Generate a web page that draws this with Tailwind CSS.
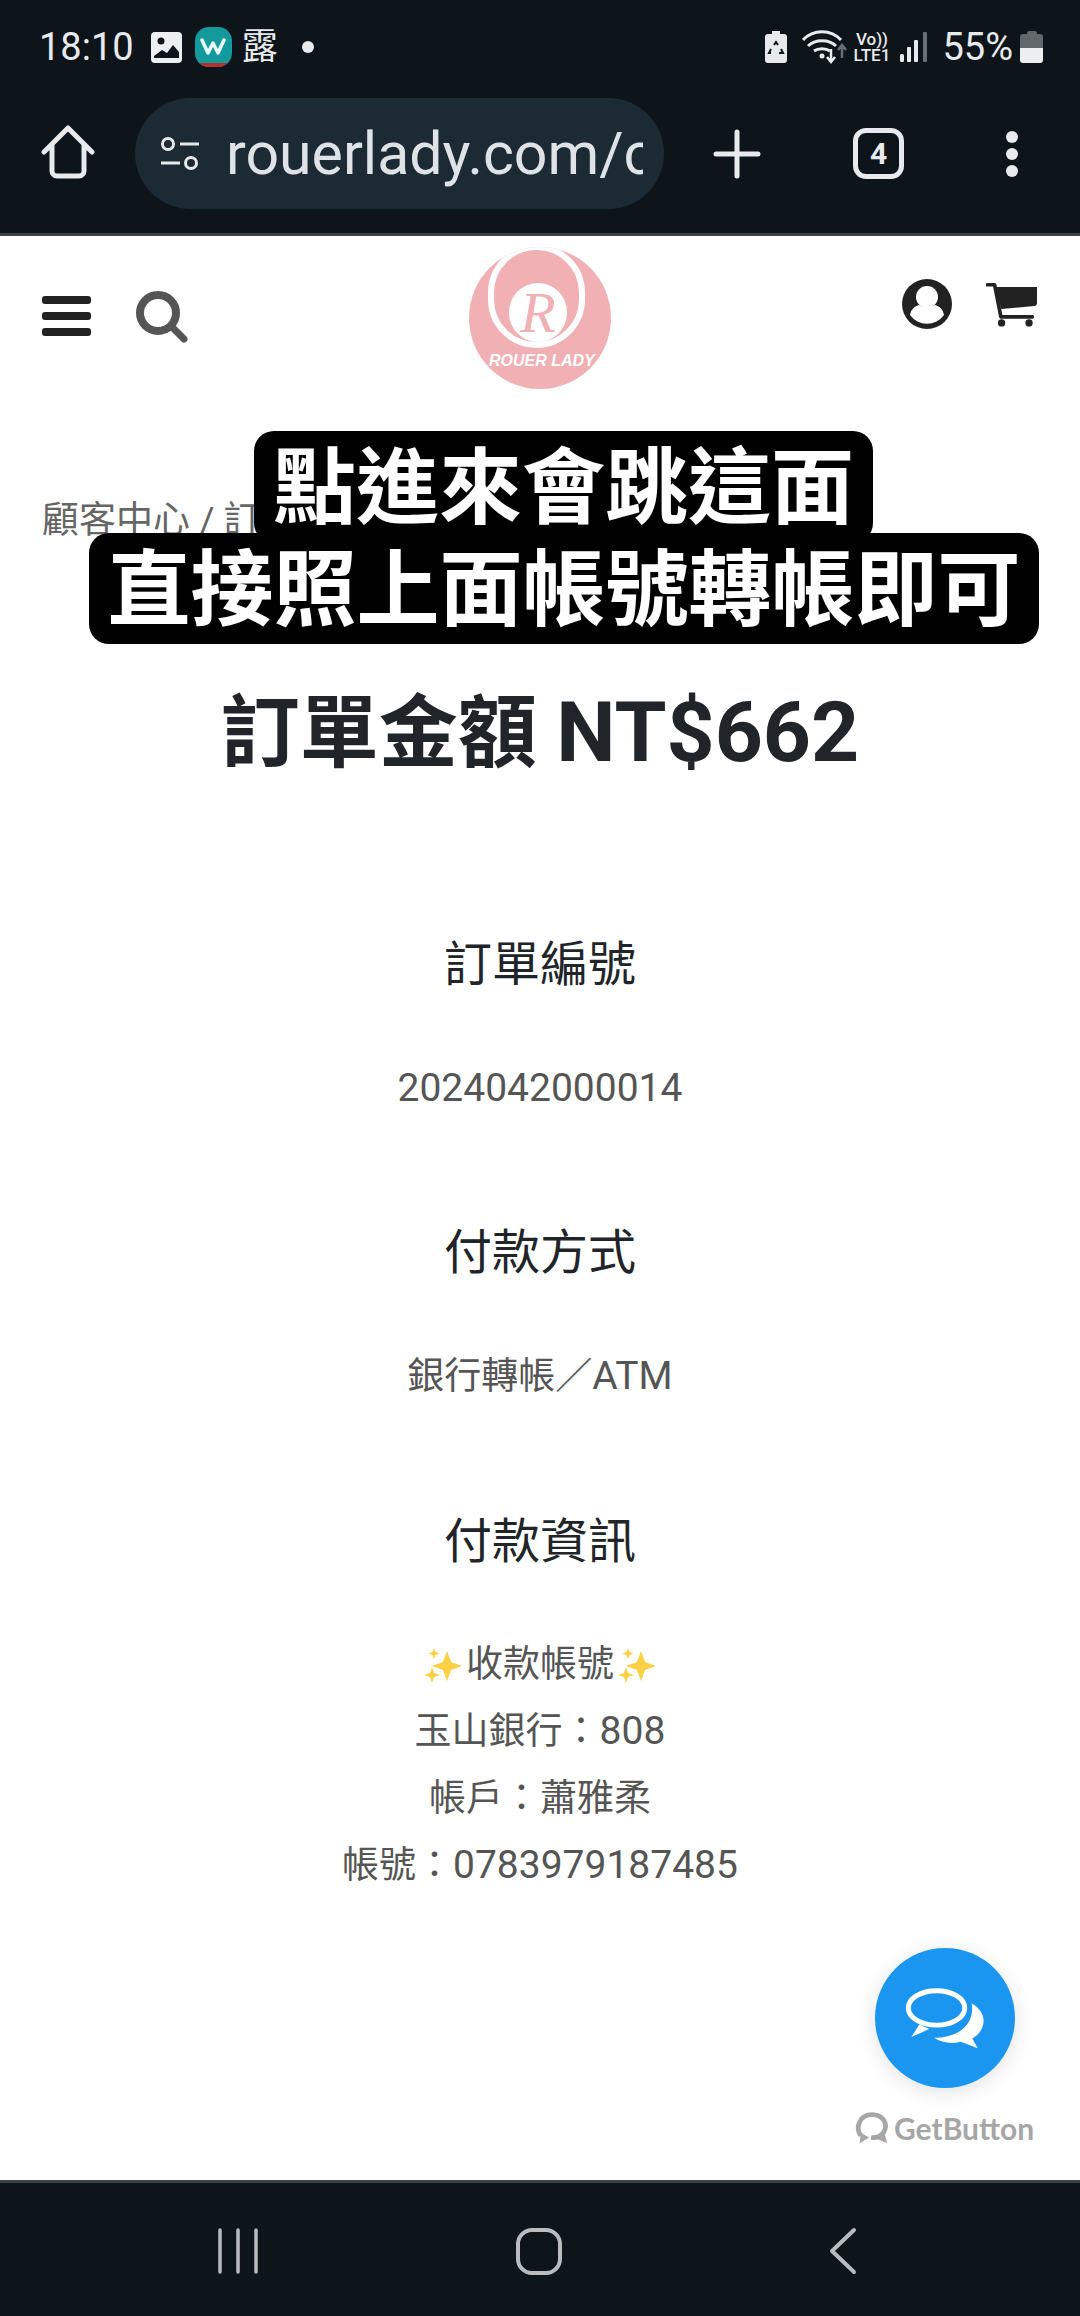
<!DOCTYPE html>
<html lang="zh-Hant">
<head>
  <meta charset="UTF-8">
  <meta name="viewport" content="width=device-width, initial-scale=1.0">
  <title>訂單金額</title>
  <script src="https://cdn.jsdelivr.net/npm/@tailwindcss/browser@4"></script>
</head>
<body class="bg-white">
  <div class="w-[1080px] h-[2316px] flex flex-col overflow-hidden font-['Roboto','Noto_Sans_CJK_TC',sans-serif]">

    <!-- Status bar + browser toolbar -->
    <header class="h-[233px] shrink-0 bg-[#0d141a] text-[#e8eaed] flex flex-col">
      <div class="h-[93px] shrink-0 flex items-center justify-between pl-[39px] pr-[37px]">
        <div class="flex items-center">
          <span class="text-[38px] leading-none">18:10</span>
          <svg class="ml-[17px]" width="32" height="32" viewBox="0 0 32 32">
            <rect x="0" y="1" width="31" height="31" rx="4" fill="#eceef0"/>
            <circle cx="10" cy="10" r="3.5" fill="#0d141a"/>
            <path d="M3 25l8-6 5 3 6-8 6 7v6H3z" fill="#0d141a"/>
          </svg>
          <span class="relative ml-[12px] w-[37px] h-[40px] rounded-[14px] bg-[#149a9c] overflow-hidden flex items-center justify-center">
            <span class="absolute bottom-0 inset-x-0 h-[4px] bg-[#b3322f]"></span>
            <svg width="26" height="18" viewBox="0 0 26 18"><path d="M2 2l6 13 5-10 5 10 6-13" fill="none" stroke="#eafcfc" stroke-width="3.5" stroke-linecap="round" stroke-linejoin="round"/></svg>
          </span>
          <span class="ml-[10px] text-[36px] leading-none">露</span>
          <span class="ml-[24px] w-[12px] h-[12px] rounded-full bg-[#e8eaed]"></span>
        </div>
        <div class="flex items-center">
          <svg width="22" height="32" viewBox="0 0 22 32">
            <path d="M7 0h8v3h4a3 3 0 0 1 3 3v23a3 3 0 0 1-3 3H3a3 3 0 0 1-3-3V6a3 3 0 0 1 3-3h4z" fill="#e8eaed"/>
            <path d="M9 14l2-3 2 3M16 18l2 4h-4M6 22H4l2-4" fill="none" stroke="#0d141a" stroke-width="2"/>
          </svg>
          <svg class="ml-[15px]" width="46" height="34" viewBox="0 0 46 34">
            <path d="M1 10c10-11 28-11 38 0M6 16c7-7 21-7 28 0M12 21c4-3 12-3 16 0" fill="none" stroke="#e8eaed" stroke-width="3"/>
            <circle cx="20" cy="26" r="2.5" fill="#e8eaed"/>
            <path d="M29 19v13M25 27l4 5 4-5" fill="none" stroke="#e8eaed" stroke-width="2.5"/>
            <path d="M40 28V16M36 20l4-5 4 5" fill="none" stroke="#6a6f73" stroke-width="2.5"/>
          </svg>
          <span class="w-[39px] ml-[4px] flex flex-col items-center text-[17px] leading-[16px] font-medium">
            <span>Vo))</span><span>LTE1</span>
          </span>
          <svg class="ml-[9px]" width="27" height="32" viewBox="0 0 27 32">
            <rect x="0" y="23" width="4" height="8" rx="1.5" fill="#e8eaed"/>
            <rect x="7" y="16" width="4" height="15" rx="1" fill="#e8eaed"/>
            <rect x="14" y="9" width="4" height="22" rx="1" fill="#e8eaed"/>
            <rect x="23" y="1" width="4" height="30" rx="1" fill="#6a6f73"/>
          </svg>
          <span class="ml-[15px] text-[38px] leading-none">55%</span>
          <span class="ml-[7px] w-[23px] h-[32px] flex flex-col items-center">
            <span class="w-[10px] h-[3px] bg-[#62676c] rounded-t-[2px]"></span>
            <span class="w-[23px] h-[14px] bg-[#62676c] rounded-t-[3px]"></span>
            <span class="w-[23px] h-[15px] bg-[#eceef0] rounded-b-[3px]"></span>
          </span>
        </div>
      </div>
      <div class="flex-1 relative">
        <svg class="absolute left-[40px] top-[32px]" width="56" height="56" viewBox="0 0 56 56">
          <path d="M4 27L28 3l24 24M12 20v26a5 5 0 0 0 5 5h22a5 5 0 0 0 5-5V20" fill="none" stroke="#e8eaed" stroke-width="5" stroke-linecap="round" stroke-linejoin="round"/>
        </svg>
        <div class="absolute left-[135px] top-[5px] w-[529px] h-[111px] rounded-full bg-[#1c2a34] flex items-center pl-[24px] overflow-hidden">
          <svg class="shrink-0" width="42" height="36" viewBox="0 0 42 36">
            <circle cx="9" cy="8" r="5.5" fill="none" stroke="#e8eaed" stroke-width="3"/>
            <path d="M21 8h19M2 27h19" stroke="#e8eaed" stroke-width="3"/>
            <circle cx="32" cy="27" r="5.5" fill="none" stroke="#e8eaed" stroke-width="3"/>
          </svg>
          <div class="ml-[25px] w-[417px] overflow-hidden whitespace-nowrap text-[59px] leading-[70px] text-[#dfe3e7]">rouerlady.com/c</div>
        </div>
        <svg class="absolute left-[712px] top-[36px]" width="50" height="50" viewBox="0 0 50 50">
          <path d="M25 3v44M4 25h42" stroke="#e8eaed" stroke-width="5" stroke-linecap="round"/>
        </svg>
        <div class="absolute left-[853px] top-[35px] w-[51px] h-[51px] rounded-[13px] border-[5px] border-[#e8eaed] flex items-center justify-center text-[30px] leading-none font-bold">4</div>
        <div class="absolute left-[1006px] top-[38px] flex flex-col gap-[5px]">
          <span class="w-[12px] h-[12px] rounded-full bg-[#e8eaed]"></span>
          <span class="w-[12px] h-[12px] rounded-full bg-[#e8eaed]"></span>
          <span class="w-[12px] h-[12px] rounded-full bg-[#e8eaed]"></span>
        </div>
      </div>
    </header>
    <div class="h-[3px] shrink-0 bg-[#3c4248]"></div>

    <!-- Page -->
    <main class="relative flex-1 bg-white">
      <div class="relative h-[174px]">
        <div class="absolute left-[42px] top-[60px] flex flex-col gap-[8px]">
          <span class="w-[49px] h-[8px] rounded-[3px] bg-[#222]"></span>
          <span class="w-[49px] h-[8px] rounded-[3px] bg-[#222]"></span>
          <span class="w-[49px] h-[8px] rounded-[3px] bg-[#222]"></span>
        </div>
        <svg class="absolute left-[134px] top-[54px]" width="54" height="54" viewBox="0 0 54 54">
          <circle cx="24" cy="23" r="18" fill="none" stroke="#555" stroke-width="8"/>
          <path d="M37 36l13 13" stroke="#555" stroke-width="7" stroke-linecap="round"/>
        </svg>
        <div class="absolute left-[469px] top-[11px] w-[142px] h-[142px] rounded-full bg-[#f0b0b4] overflow-hidden">
          <div class="absolute left-[19px] top-[-3px] w-[97px] h-[104px] rounded-full border-[6px] border-white"></div>
          <div class="absolute left-[40px] top-[36px] w-[58px] h-[59px] rounded-full bg-white flex items-center justify-center font-['Liberation_Serif',serif] italic text-[58px] leading-none text-[#f0b0b4]">R</div>
          <span class="absolute left-[20px] top-[106px] font-['Liberation_Sans',sans-serif] italic font-bold text-[16px] leading-none text-white whitespace-nowrap">ROUER LADY</span>
        </div>
        <svg class="absolute left-[902px] top-[43px]" width="50" height="50" viewBox="0 0 50 50">
          <circle cx="25" cy="25" r="25" fill="#222"/>
          <circle cx="25" cy="18" r="11" fill="#fff"/>
          <path d="M8 36c1-6 5-9 9-10 4 3 12 3 16 0 4 1 8 4 9 10a21 21 0 0 1-34 0z" fill="#fff"/>
        </svg>
        <svg class="absolute left-[986px] top-[47px]" width="51" height="44" viewBox="0 0 154 132">
          <path d="M28 12H154V60Q154 68 146 69L46 78z" fill="#222"/>
          <path d="M5 5H26L45 102H140" fill="none" stroke="#222" stroke-width="11" stroke-linecap="round" stroke-linejoin="round"/>
          <circle cx="47" cy="120" r="11" fill="#222"/>
          <circle cx="130" cy="120" r="11" fill="#222"/>
        </svg>
      </div>

      <div class="text-[37px] leading-[50px] text-[#666] pl-[42px] mt-[86px]">顧客中心 / 訂單</div>

      <h1 class="mt-[139px] text-center text-[79px] leading-[96px] font-bold text-[#212529]">訂單金額 <span class="text-[84px]">NT$662</span></h1>

      <section class="mt-[153px] text-center">
        <h2 class="text-[48px] leading-[60px] text-[#212529]">訂單編號</h2>
        <p class="mt-[60px] text-[39px] leading-[67px] text-[#555]">2024042000014</p>
      </section>
      <section class="mt-[101px] text-center">
        <h2 class="text-[48px] leading-[60px] text-[#212529]">付款方式</h2>
        <p class="mt-[60px] text-[37px] leading-[67px] text-[#555]">銀行轉帳／<span class="text-[39px]">ATM</span></p>
      </section>
      <section class="mt-[102px] text-center">
        <h2 class="text-[48px] leading-[60px] text-[#212529]">付款資訊</h2>
        <div class="mt-[59px] text-[37px] leading-[67px] text-[#555]">
          <p class="flex items-center justify-center gap-[3px]">
            <svg width="40" height="40" viewBox="0 0 40 40"><path d="M24 6l4 11 11 4-11 4-4 11-4-11-11-4 11-4zM9 22l2 6 6 2-6 2-2 6-2-6-6-2 6-2zM11 3l1.500 4 4 1.500-4 1.500L11 14l-1.500-4-4-1.500 4-1.500z" fill="#fbd043"/></svg>
            <span>收款帳號</span>
            <svg width="40" height="40" viewBox="0 0 40 40"><path d="M24 6l4 11 11 4-11 4-4 11-4-11-11-4 11-4zM9 22l2 6 6 2-6 2-2 6-2-6-6-2 6-2zM11 3l1.500 4 4 1.500-4 1.500L11 14l-1.500-4-4-1.500 4-1.500z" fill="#fbd043"/></svg>
          </p>
          <p>玉山銀行：<span class="text-[39px]">808</span></p>
          <p>帳戶：蕭雅柔</p>
          <p>帳號：<span class="text-[39px]">0783979187485</span></p>
        </div>
      </section>

      <!-- Video captions lying over the page -->
      <div class="absolute left-[254px] top-[195px] w-[619px] h-[112px] rounded-[20px] bg-black text-white font-bold text-[83px] leading-[116px] text-center whitespace-nowrap">點進來會跳這面</div>
      <div class="absolute left-[89px] top-[297px] w-[950px] h-[111px] rounded-[20px] bg-black text-white font-bold text-[83px] leading-[116px] text-center whitespace-nowrap">直接照上面帳號轉帳即可</div>

      <!-- GetButton chat widget -->
      <button class="absolute left-[875px] top-[1712px] w-[140px] h-[140px] rounded-full bg-[#1a96f0] shadow-[0_4px_20px_rgba(0,0,0,0.12)] flex items-center justify-center">
        <svg width="82" height="63" viewBox="255 195 245 190">
          <ellipse cx="352" cy="258" rx="85" ry="52" fill="none" stroke="#fff" stroke-width="15"/>
          <path d="M300 308L276 346L330 322z" fill="#fff"/>
          <path d="M458 245C490 262 498 290 492 310C486 330 475 342 460 350L476 380L425 360C395 368 365 362 345 348C400 350 470 320 458 245z" fill="#fff"/>
        </svg>
      </button>
      <div class="absolute left-[855px] top-[1875px] flex items-center text-[#a6a6a6]">
        <svg width="36" height="34" viewBox="0 0 38 34">
          <path d="M6 25C0 16 5 3 18 3c11 0 17 9 13 17-2 5-8 8-14 7" fill="none" stroke="#a6a6a6" stroke-width="5"/>
          <path d="M6 22l-1 11 10-6zM20 27l14 6-3-11z" fill="#a6a6a6"/>
        </svg>
        <span class="ml-[3px] font-['Lato',sans-serif] font-bold text-[30px] leading-[34px]">GetButton</span>
      </div>
    </main>

    <!-- Android nav bar -->
    <div class="h-[3px] shrink-0 bg-[#3c4248]"></div>
    <nav class="h-[133px] shrink-0 bg-[#0d141a] relative">
      <svg class="absolute left-[215px] top-[45px]" width="44" height="46" viewBox="0 0 44 46">
        <path d="M5 2v42M23 2v42M41 2v42" stroke="#b9bcbe" stroke-width="3.500" stroke-linecap="round"/>
      </svg>
      <svg class="absolute left-[515px] top-[44px]" width="48" height="48" viewBox="0 0 48 48">
        <rect x="3" y="3" width="42" height="43" rx="14" fill="none" stroke="#b9bcbe" stroke-width="4"/>
      </svg>
      <svg class="absolute left-[827px] top-[44px]" width="32" height="48" viewBox="0 0 32 48">
        <path d="M27 3L5 24l22 21" fill="none" stroke="#b9bcbe" stroke-width="4" stroke-linecap="round" stroke-linejoin="round"/>
      </svg>
    </nav>
  </div>
</body>
</html>
